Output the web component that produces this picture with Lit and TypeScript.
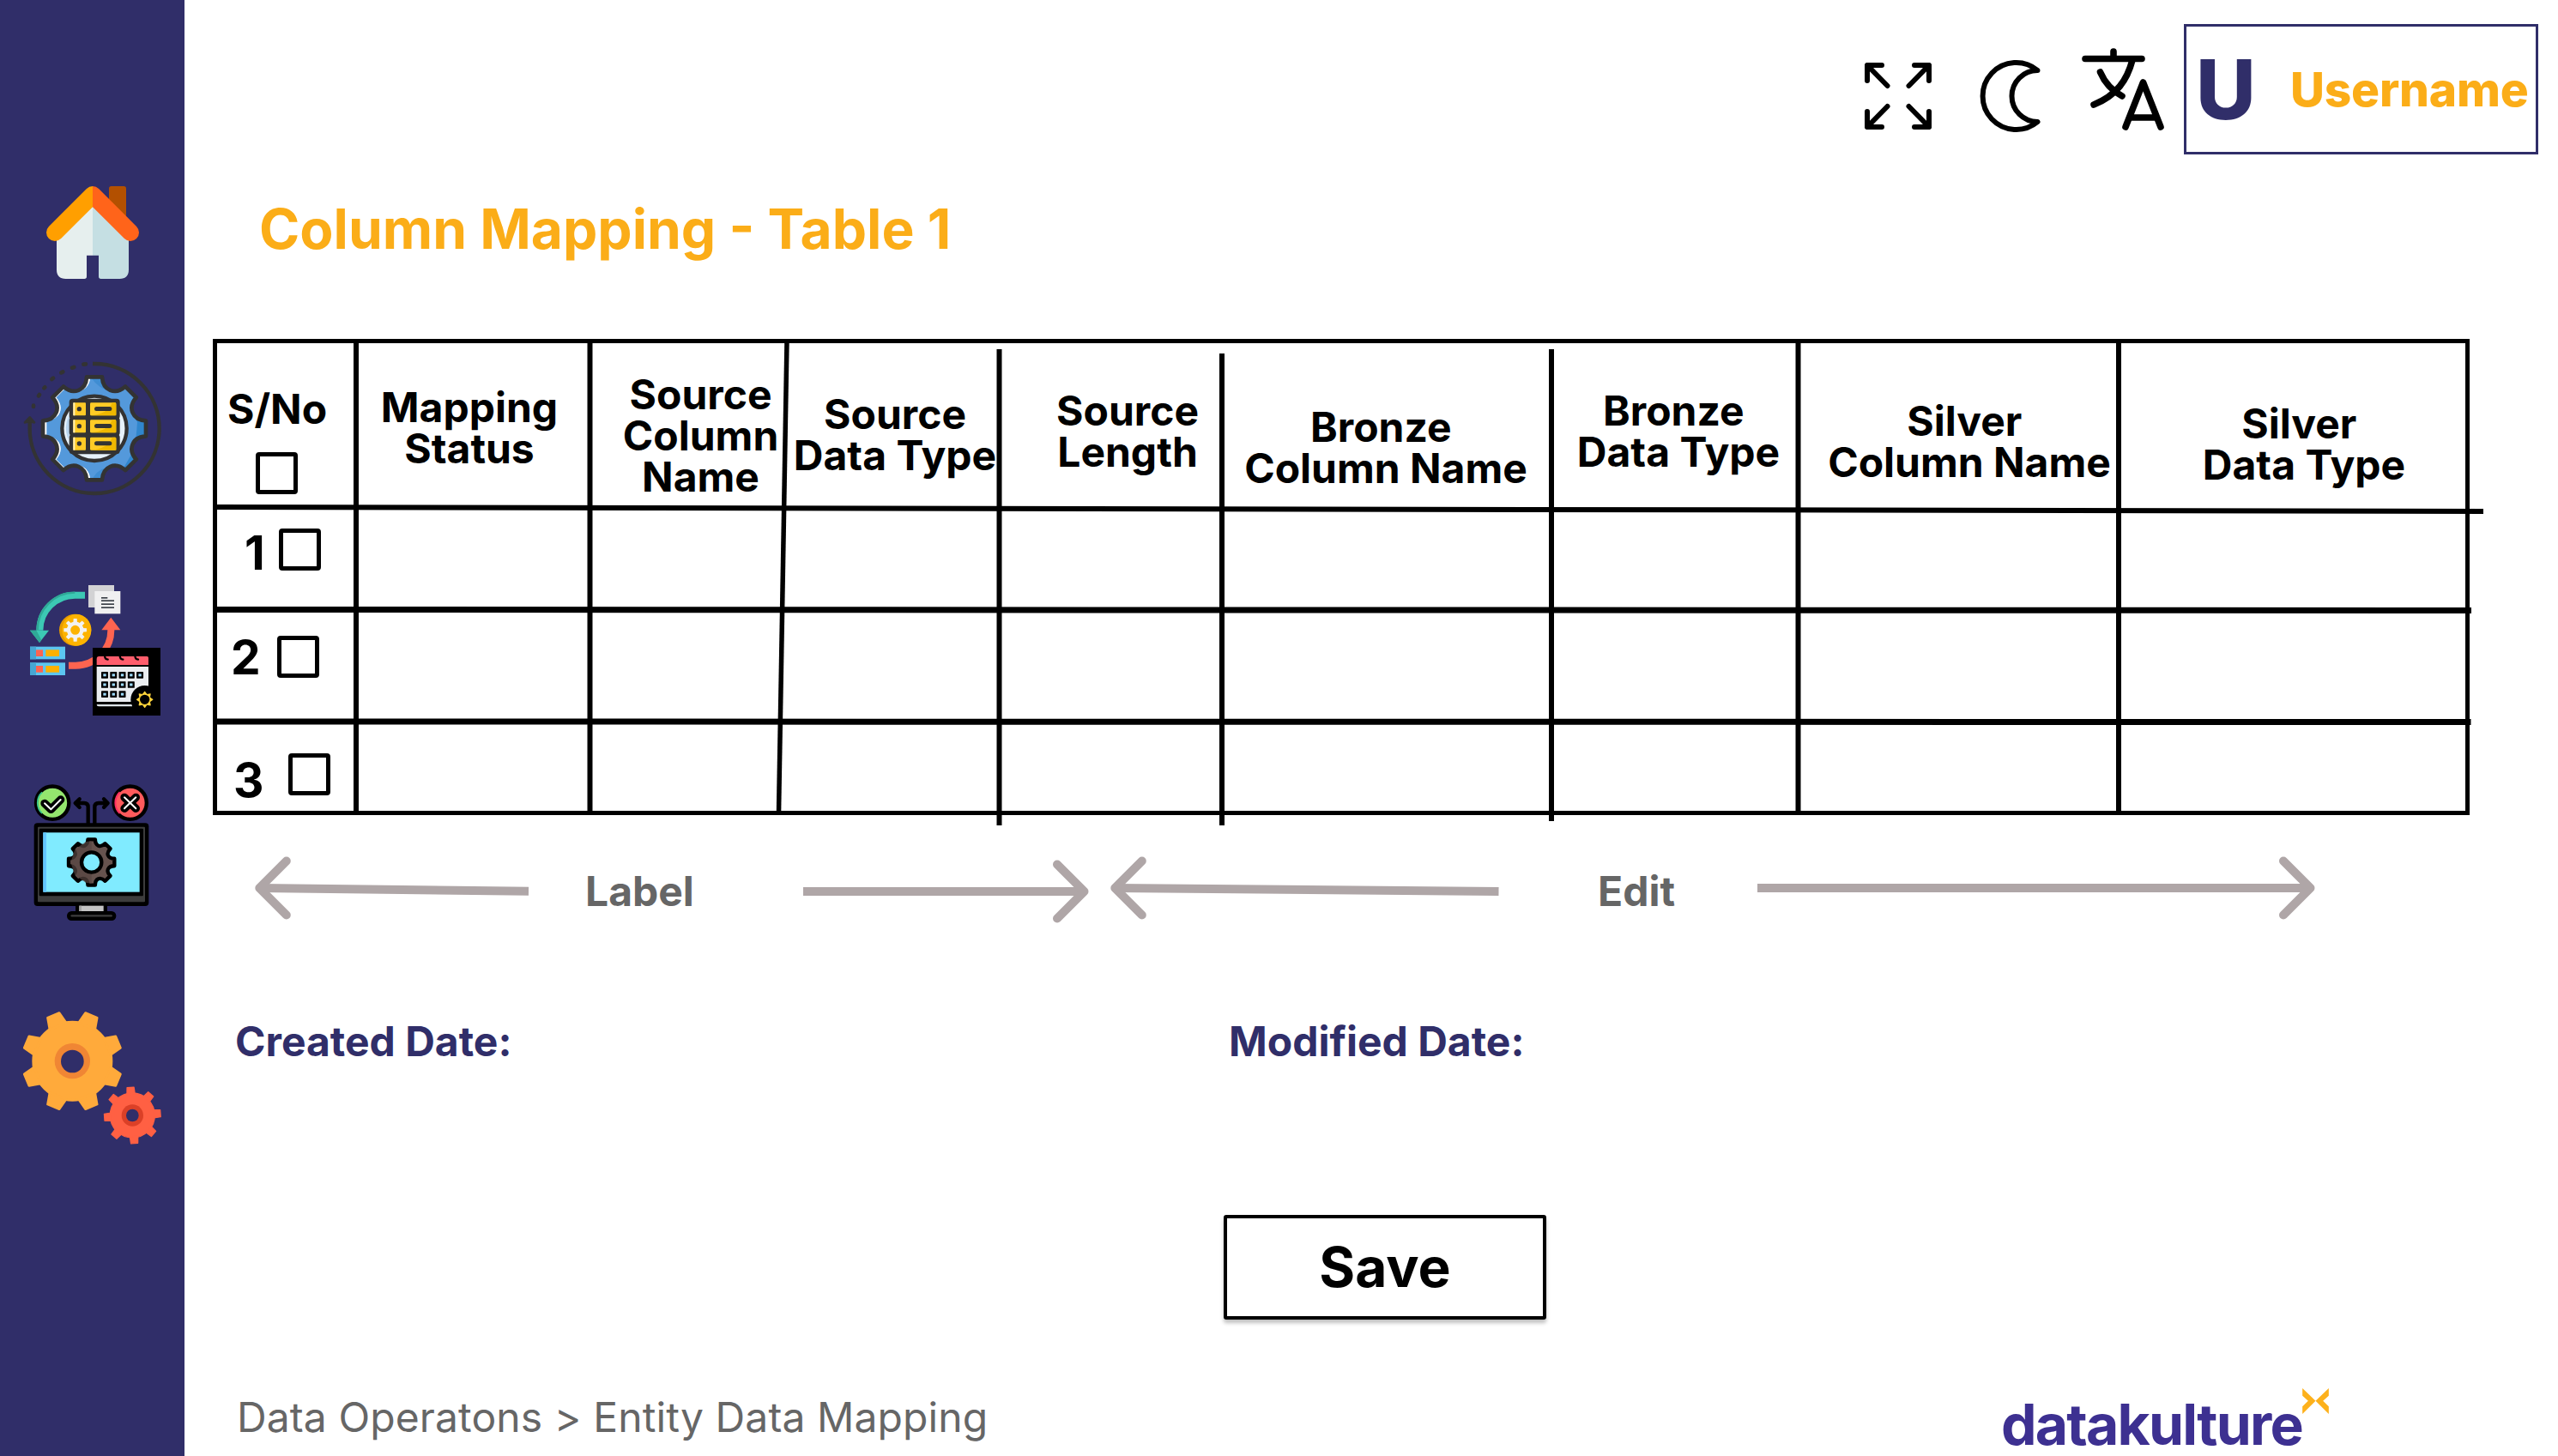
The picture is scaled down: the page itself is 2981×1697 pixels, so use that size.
import { LitElement, html, svg, css } from "lit";
import { customElement } from "lit/decorators.js";

type Pt = [number, number];

const polar = (cx: number, cy: number, r: number, deg: number): Pt => {
  const a = ((deg - 90) * Math.PI) / 180;
  return [+(cx + r * Math.cos(a)).toFixed(1), +(cy + r * Math.sin(a)).toFixed(1)];
};

/** Gear whose teeth are joined by smooth concave valleys. */
const softGear = (cx: number, cy: number, tip: number, valley: number, half: number): string => {
  let d = "";
  for (let i = 0; i < 8; i++) {
    const a = i * 45;
    d += `${i ? "L" : "M"}${polar(cx, cy, tip, a - half)}L${polar(cx, cy, tip, a + half)}`;
    d += `C${polar(cx, cy, valley, a + half + 4)} ${polar(cx, cy, valley, a + 41 - half)} ${polar(cx, cy, tip, a + 45 - half)}`;
  }
  return d + "Z";
};

/** Rectangular-ish gear teeth standing on a disc. */
const teeth = (cx: number, cy: number, from: number, to: number, wIn: number, wOut: number, turn: number) =>
  Array.from({ length: 8 }, (_, i) => svg`<path
    transform="rotate(${turn + i * 45} ${cx} ${cy})"
    d="M${cx - wIn} ${cy - from}L${cx - wOut} ${cy - to}H${cx + wOut}L${cx + wIn} ${cy - from}Z"/>`);

const homeIcon = html`<svg class="nav-icon" viewBox="0 0 645 600" height="200">
  <clipPath id="hl"><rect x="150" y="70" width="174" height="220" /></clipPath>
  <clipPath id="hr"><rect x="324" y="70" width="174" height="220" /></clipPath>
  <rect x="381" y="81" width="60" height="120" rx="8" fill="#b35000" />
  <path fill="#e6efee" d="M324 140V323H303V397Q303 405 295 405H230Q198 405 198 373V260Z" />
  <path fill="#c5dfe3" d="M324 140V323H345V397Q345 405 353 405H418Q450 405 450 373V260Z" />
  <g fill="none" stroke-width="60" stroke-linecap="round" stroke-linejoin="round">
    <path clip-path="url(#hl)" stroke="#ff9f00" d="M192 243L324 111L456 243" />
    <path clip-path="url(#hr)" stroke="#ff641a" d="M192 243L324 111L456 243" />
  </g>
</svg>`;

const gearShape = softGear(330, 928, 182, 136, 8.5);
const dataGearIcon = html`<svg class="nav-icon" viewBox="0 600 645 600" height="200">
  <clipPath id="dg"><path d=${gearShape} /></clipPath>
  <g fill="none" stroke="#333" stroke-width="13">
    <path d="M324 702H330A226.500 226.500 0 1 1 104 925V905" />
    <path stroke-linecap="round" stroke-width="14" d="M117 852v-4M135 814l3-4M154 787l3-3M181 756l5-4M214 733l6-3M252 716l7-2M292 704l8-1" />
  </g>
  <path fill="#333" stroke="#333" stroke-width="8" stroke-linejoin="round" d="M104 889L120 907L104 903L87 907Z" />
  <g clip-path="url(#dg)">
    <rect x="140" y="740" width="380" height="380" fill="#fff" />
    <path fill="#5499db" transform="translate(13 0)" d=${gearShape} />
    <path fill="#3086cd" d="M440 780L470 815Q440 850 480 905Q478 945 470 1000L430 1070L455 1080L530 960V880L480 780Z" />
    <path fill="#3f8dd2" d="M318 750Q345 790 390 800L352 745ZM325 1100Q345 1065 395 1060L355 1105Z" />
  </g>
  <path d=${gearShape} fill="none" stroke="#333" stroke-width="14" stroke-linejoin="round" />
  <circle cx="330" cy="928" r="113" fill="#e6f1fa" stroke="#333" stroke-width="13" />
  <path fill="#b9d5ee" d="M240 885Q222 920 238 965L243 950V890Z" />
  <g fill="#333">
    <rect x="242" y="824" width="177" height="72" rx="12" />
    <rect x="242" y="888" width="177" height="66" rx="12" />
    <rect x="242" y="948" width="177" height="70" rx="12" />
    <rect x="250" y="860" width="162" height="150" />
  </g>
  ${[838, 898, 959].map(
    (y) => svg`<rect x="256" y=${y} width="44" height="45" rx="3" fill="#ffcb26"/>
      <rect x="315" y=${y} width="91" height="45" rx="4" fill="#ffcb26"/>
      <path d="M315 ${y + 45}Q380 ${y + 40} 392 ${y}H402Q406 ${y} 406 ${y + 4}V${y + 45}Z" fill="#efb800"/>
      <rect x="256" y=${y} width="6" height="45" fill="#fff0b8"/>
      <circle cx="277" cy=${y + 22} r="8" fill="#333"/>
      <rect x="330" y=${y + 14} width="61" height="15" rx="7.500" fill="#333"/>`
  )}
</svg>`;

const cells = [5, 4, 3].flatMap((n, r) =>
  Array.from({ length: n }, (_, c) => svg`<rect x=${354 + c * 30.8} y=${369 + r * 33.5} width="24" height="23" rx="2" fill="#000"/>
    <rect x=${361 + c * 30.8} y=${376 + r * 33.5} width="10" height="9" fill="#9ddcff"/>`)
);

const syncIcon = html`<svg class="nav-icon" viewBox="0 0 645 600" height="200">
  <path fill="none" stroke="#3cc8b4" stroke-width="24" d="M297 101H262A123 123 0 0 0 139 224" />
  <path fill="none" stroke="#2fa997" stroke-width="7" d="M262 92A131 131 0 0 0 131 224" />
  <path fill="#3cc8b4" d="M105 224H171L138 267Z" />
  <path fill="#2fa997" d="M105 224H127L145 258L138 267Z" />
  <rect x="309" y="66" width="90" height="78" fill="#d2d2d4" />
  <rect x="331" y="87" width="90" height="79" fill="#f0f0f1" />
  <g fill="#3b4048">
    <rect x="354" y="108" width="22" height="5" />
    <rect x="354" y="118" width="45" height="5" />
    <rect x="354" y="130" width="45" height="5" />
    <rect x="354" y="142" width="45" height="5" />
  </g>
  <circle cx="263" cy="223" r="56" fill="#e69b00" />
  <ellipse cx="268" cy="223" rx="51" ry="55" fill="#fdb300" />
  <circle cx="263" cy="223" r="23" fill="none" stroke="#f2f2f2" stroke-width="13" />
  <g fill="#f2f2f2">${teeth(263, 223, 25, 40, 7, 6, 0)}</g>
  <path fill="none" stroke="#ff6450" stroke-width="24" d="M388 220A124 124 0 0 1 264 347H240" />
  <path fill="#ff6450" d="M388 179L421 223H355Z" />
  ${[281, 337].map(
    (y) => svg`<rect x="105" y=${y} width="123" height="44" fill="#5cc6f0"/>
      <rect x="105" y=${y} width="21" height="44" fill="#47a6d3"/>
      <rect x="126" y=${y + 11} width="24" height="23" fill="#ff6450"/>
      <rect x="160" y=${y + 11} width="47" height="23" fill="#fdb000"/>`
  )}
  <rect x="324" y="285" width="237" height="237" fill="#000" />
  <path fill="#ff5d6c" d="M346 315H514Q519 315 519 320V345H338V325Q338 315 346 315Z" />
  <path fill="none" stroke="#000" stroke-width="7" stroke-linecap="round" d="M366 312Q366 325 377 326M419 312Q419 325 430 326M472 312Q472 325 483 326" />
  <path fill="#ebeef1" d="M338 351H519V470L455 474H338Z" />
  <path fill="#dfe5ea" d="M338 483H462V490H345Q338 490 338 483Z" />
  ${cells}
  <circle cx="506" cy="466" r="49" fill="#000" />
  <circle cx="506" cy="466" r="19" fill="none" stroke="#ffd43b" stroke-width="4" />
  <g fill="#ffd43b">${teeth(506, 466, 19, 29, 8, 1, 0)}</g>
</svg>`;

const monitorGear = softGear(320, 1035, 81, 58, 9);
const monitorIcon = html`<svg class="nav-icon" viewBox="0 600 645 720" height="240">
  <g stroke="#000" stroke-width="13">
    <circle cx="183.500" cy="827" r="57.500" fill="#94e66e" />
    <circle cx="455" cy="827" r="57.500" fill="#ff5a5c" />
  </g>
  <path fill="none" stroke="#35c98f" stroke-width="5" d="M147 864A51 51 0 0 1 147 790" />
  <path fill="none" stroke="#ff2f63" stroke-width="6" d="M419 864A51 51 0 0 1 419 790" />
  <g fill="none" stroke-linecap="round" stroke-linejoin="round">
    <path stroke="#000" stroke-width="28" d="M156 829L178 850L212 816" />
    <path stroke="#fff" stroke-width="6" d="M156 829L178 850L212 816" />
    <path stroke="#000" stroke-width="28" d="M435 808L475 847M475 808L435 847" />
    <path stroke="#fff" stroke-width="6" d="M435 808L475 847M475 808L435 847" />
    <path stroke="#000" stroke-width="13" d="M308 900V842Q308 828 294 828H264M278 814L263 828L278 843M331 900V842Q331 828 345 828H376M363 814L377 828L363 843" />
  </g>
  <rect x="119" y="898" width="401" height="290" rx="12" fill="#000" />
  <rect x="132" y="911" width="375" height="263" rx="3" fill="#3d3d3d" />
  <rect x="137" y="917" width="364" height="236" rx="4" fill="#000" />
  <rect x="151" y="931" width="337" height="208" fill="#80ebff" />
  <rect x="151" y="931" width="11" height="208" fill="#63c6ff" />
  <path d=${monitorGear} fill="#66534e" stroke="#000" stroke-width="13" stroke-linejoin="round" />
  <path d="M320 961V1109L300 1106L262 1080L247 1035L262 990L300 963Z" fill="#574642" opacity=".7" />
  <circle cx="320" cy="1035" r="35" fill="#80ebff" stroke="#000" stroke-width="13" />
  <rect x="264" y="1184" width="111" height="26" fill="#000" />
  <rect x="277" y="1187" width="85" height="19" fill="#c4c4c4" />
  <rect x="277" y="1187" width="8" height="19" fill="#a5a5a5" />
  <rect x="234" y="1206" width="172" height="33" rx="16" fill="#000" />
  <path stroke="#3d3d3d" stroke-width="7" stroke-linecap="round" d="M251 1222H389" />
</svg>`;

const settingsIcon = html`<svg class="nav-icon" viewBox="0 0 645 630" height="210">
  <g fill="#ffaa3b" stroke="#ffaa3b" stroke-width="8" stroke-linejoin="round">
    <circle cx="253" cy="260" r="137" />
    ${teeth(253, 260, 132, 173, 31, 22, 22.5)}
  </g>
  <circle cx="253" cy="260" r="62" fill="#f08634" />
  <circle cx="253" cy="261" r="40" fill="#302e69" />
  <g fill="#ff6043" stroke="#ff6043" stroke-width="4" stroke-linejoin="round">
    <circle cx="463" cy="450" r="78" />
    ${teeth(463, 450, 74, 98, 14, 12, -4)}
  </g>
  <circle cx="463" cy="450" r="38" fill="#db4027" />
  <circle cx="463" cy="450" r="22" fill="#302e69" />
</svg>`;

@customElement("side-nav")
class SideNav extends LitElement {
  static styles = css`
    :host {
      display: flex;
      flex-direction: column;
      box-sizing: border-box;
      width: 215px;
      height: 1697px;
      padding-top: 190px;
      background: #302e69;
    }
    .nav-icon {
      display: block;
      width: 215px;
      flex: none;
    }
    .group {
      display: flex;
      flex-direction: column;
      margin-bottom: 70px;
    }
    .group + .group {
      margin-bottom: 50px;
    }
  `;
  render() {
    return html`
      <div class="group">${homeIcon}${dataGearIcon}</div>
      <div class="group">${syncIcon}${monitorIcon}</div>
      ${settingsIcon}
    `;
  }
}

@customElement("top-bar")
class TopBar extends LitElement {
  static styles = css`
    :host {
      display: flex;
      justify-content: flex-end;
      align-items: flex-start;
      box-sizing: border-box;
      height: 235px;
      padding: 28px 23px 0 0;
    }
    svg {
      display: block;
      flex: none;
      fill: none;
      stroke: #000;
      stroke-linecap: round;
      stroke-linejoin: round;
    }
    .expand { margin: 45px 56px 0 0; stroke-width: 6; }
    .moon { margin: 41px 46px 0 0; stroke-width: 6; }
    .lang { margin: 27px 22px 0 0; stroke-width: 7.6; }
    .user {
      display: flex;
      box-sizing: border-box;
      width: 413px;
      height: 152px;
      border: 3px solid #302e69;
      font-family: Inter, "Liberation Sans", sans-serif;
      white-space: nowrap;
    }
    .initial {
      width: 121px;
      padding: 25px 0 0 11px;
      box-sizing: border-box;
      color: #302e69;
      font-size: 96px;
      font-weight: 840;
      line-height: 96px;
    }
    .name {
      padding-top: 46px;
      color: #fbad18;
      font-size: 55px;
      font-weight: 790;
      line-height: 55px;
      letter-spacing: -0.2px;
    }
  `;
  render() {
    return html`
      <svg class="expand" width="78" height="78" viewBox="0 0 78 78">
        <path d="M3 21V3H20M3 3L26.500 27M58 3H75V21M75 3L51.500 27M3 57V75H20M3 75L26.500 51M58 75H75V57M75 75L51.500 51" />
      </svg>
      <svg class="moon" width="72" height="86" viewBox="0 0 72 86">
        <path d="M67.500 13A39 39 0 1 0 67.500 73A30 30 0 0 1 67.500 13Z" />
      </svg>
      <svg class="lang" width="98" height="99" viewBox="0 0 98 99">
        <path d="M5 13.500H71M38 5V13M60 15C54 38 42 56 15 67M22.500 29C28 42 37 51 48 57" />
        <path d="M52 93L72.500 41L93 93M58 82H87" />
      </svg>
      <div class="user"><span class="initial">U</span><span class="name">Username</span></div>
    `;
  }
}

const headings = [
  ["Mapping", "Status"],
  ["Source", "Column", "Name"],
  ["Source", "Data Type"],
  ["Source", "Length"],
  ["Bronze ", "Column Name"],
  ["Bronze ", "Data Type"],
  ["Silver ", "Column Name"],
  ["Silver ", "Data Type"],
];

@customElement("mapping-table")
class MappingTable extends LitElement {
  static styles = css`
    :host {
      display: grid;
      position: relative;
      grid-template-columns: 167px 272px 225px 252px 260px 384px 288px 373px 409px;
      grid-template-rows: 199px 117px 130px 109px;
      width: 2630px;
      height: 555px;
      margin-left: 33px;
      font: 650 48px/48px Inter, "Liberation Sans", sans-serif;
      color: #000;
    }
    .rules {
      position: absolute;
      left: 0;
      top: 0;
      overflow: visible;
      fill: none;
      stroke: #000;
    }
    .head {
      box-sizing: border-box;
      text-align: center;
      white-space: pre;
    }
    .head0 { padding: 56px 8px 0 0; }
    .head1 { padding: 41px 0 0 34px; }
    .head2 { padding: 64px 0 0 10px; }
    .head3 { padding: 60px 0 0 40px; }
    .head4 { padding: 79px 2px 0 0; }
    .head5 { padding: 60px 0 0 8px; }
    .head6 { padding: 72px 0 0 25px; }
    .head7 { padding: 75px 0 0 23px; }
    .serial {
      display: flex;
      flex-direction: column;
      box-sizing: border-box;
      padding: 58px 0 0 17px;
    }
    .box {
      box-sizing: border-box;
      flex: none;
      width: 49px;
      height: 49px;
      border: 5px solid #000;
      border-radius: 4px;
    }
    .serial .box { margin: 26px 0 0 33px; }
    .row {
      display: flex;
      grid-column: 1 / -1;
      align-items: flex-start;
      box-sizing: border-box;
      font-size: 55px;
      line-height: 55px;
    }
    .num { box-sizing: border-box; }
    .row1 { padding: 22px 0 0 37px; }
    .row1 .num { width: 40px; padding-top: 1px; }
    .row2 { padding: 28px 0 0 21px; }
    .row2 .num { width: 54px; }
    .row2 .box { margin-top: 2px; }
    .row3 { padding: 37px 0 0 24px; }
    .row3 .num { width: 64px; padding-top: 4px; }
  `;
  render() {
    return html`
      <div class="serial"><span>S/No</span><span class="box"></span></div>
      ${headings.map((h, i) => html`<div class="head head${i}">${h.join("\n")}</div>`)}
      ${[1, 2, 3].map(
        (n) => html`<div class="row row${n}"><span class="num">${n}</span><span class="box"></span></div>`
      )}
      <svg class="rules" width="2630" height="555" viewBox="0 0 2630 555">
        <rect x="2.500" y="2.500" width="2625" height="550" stroke-width="5" />
        <path stroke-width="6" d="M167 3V553M439.500 3V553M916.500 12V567M1176 17V567M1560 12V562M1847.500 3V553M2221 3V553" />
        <path stroke-width="5.500" d="M669 3L659.500 553" />
        <path stroke-width="6" d="M3 196L2646 201" />
        <path stroke-width="7" d="M3 315.500L2632 316.500M3 446L2631.500 446.500" />
      </svg>
    `;
  }
}

@customElement("range-legend")
class RangeLegend extends LitElement {
  static styles = css`
    :host {
      display: grid;
      grid-template-columns: 384px 255px 358px 567px 187px 650px;
      height: 80px;
      margin: 45px 0 0 82px;
      font: 650 48px/48px Inter, "Liberation Sans", sans-serif;
      color: #666;
    }
    svg {
      display: block;
      overflow: visible;
      fill: none;
      stroke: #afa6a7;
      stroke-width: 10;
    }
    .tip {
      stroke-linecap: round;
      stroke-linejoin: round;
    }
    .text { padding: 19.5px 0 0 1px; }
  `;
  render() {
    return html`
      <svg width="319" height="80"><path d="M5 40L319 43.700" /><path class="tip" d="M36.800 8.500L5.300 40L36.800 71.500" /></svg>
      <span class="text">Label</span>
      <svg width="333" height="80"><path d="M0 44H328" /><path class="tip" d="M296 12.500L327.500 44L296 75.500" /></svg>
      <svg width="453" height="80"><path d="M5 40L452.500 43.900" /><path class="tip" d="M36.800 8.500L5.300 40L36.800 71.500" /></svg>
      <span class="text">Edit</span>
      <svg width="650" height="80"><path d="M0 40H645" /><path class="tip" d="M613 8.500L644.500 40L613 71.500" /></svg>
    `;
  }
}

@customElement("app-root")
class AppRoot extends LitElement {
  static styles = css`
    :host {
      display: flex;
      width: 2981px;
      height: 1697px;
      overflow: hidden;
      background: #fff;
      font-family: Inter, "Liberation Sans", sans-serif;
    }
    main {
      display: flex;
      flex-direction: column;
      width: 2766px;
      height: 1697px;
    }
    h1 {
      height: 160px;
      margin: 0;
      padding-left: 87px;
      box-sizing: border-box;
      color: #fbad18;
      font-size: 64px;
      font-weight: 650;
      line-height: 64px;
      white-space: nowrap;
    }
    .dates {
      display: grid;
      grid-template-columns: 1158px 1fr;
      height: 111px;
      padding: 115px 0 0 59px;
      color: #302e69;
      font-size: 48px;
      font-weight: 650;
      line-height: 48px;
    }
    .save {
      box-sizing: border-box;
      width: 376px;
      height: 122px;
      margin: 115px 0 0 1211px;
      padding: 0;
      border: 4px solid #000;
      border-radius: 3px;
      background: #fff;
      box-shadow: 0 4px 4px rgba(0, 0, 0, 0.25);
      color: #000;
      font: 700 64px/64px Inter, "Liberation Sans", sans-serif;
    }
    footer {
      display: flex;
      height: 159px;
      padding-left: 61px;
      color: #666;
      font-size: 48px;
      line-height: 48px;
      white-space: nowrap;
    }
    .crumbs {
      width: 2056px;
      padding-top: 89.5px;
      letter-spacing: 0.1px;
    }
    .logo {
      display: flex;
      align-items: flex-start;
      padding-top: 72px;
      color: #3d3091;
      font-size: 66px;
      font-weight: 700;
      line-height: 66px;
      letter-spacing: -1.8px;
    }
    .word {
      width: 351px;
      padding-top: 17px;
    }
    .mark { display: block; margin-top: 8px; }
  `;
  render() {
    return html`
      <side-nav></side-nav>
      <main>
        <top-bar></top-bar>
        <h1>Column Mapping - Table 1</h1>
        <mapping-table></mapping-table>
        <range-legend></range-legend>
        <div class="dates"><span>Created Date:</span><span>Modified Date:</span></div>
        <button class="save">Save</button>
        <footer>
          <span class="crumbs">Data Operatons &gt; Entity Data Mapping</span>
          <span class="logo"
            ><span class="word">datakulture</span>
            <svg class="mark" width="31" height="30" viewBox="0 0 92 90" fill="#fdb11c">
              <path d="M0 0L46 44L0 90V64L20 44L0 26ZM92 0L46 44L92 90V64L72 44L92 26Z" /></svg
          ></span>
        </footer>
      </main>
    `;
  }
}
